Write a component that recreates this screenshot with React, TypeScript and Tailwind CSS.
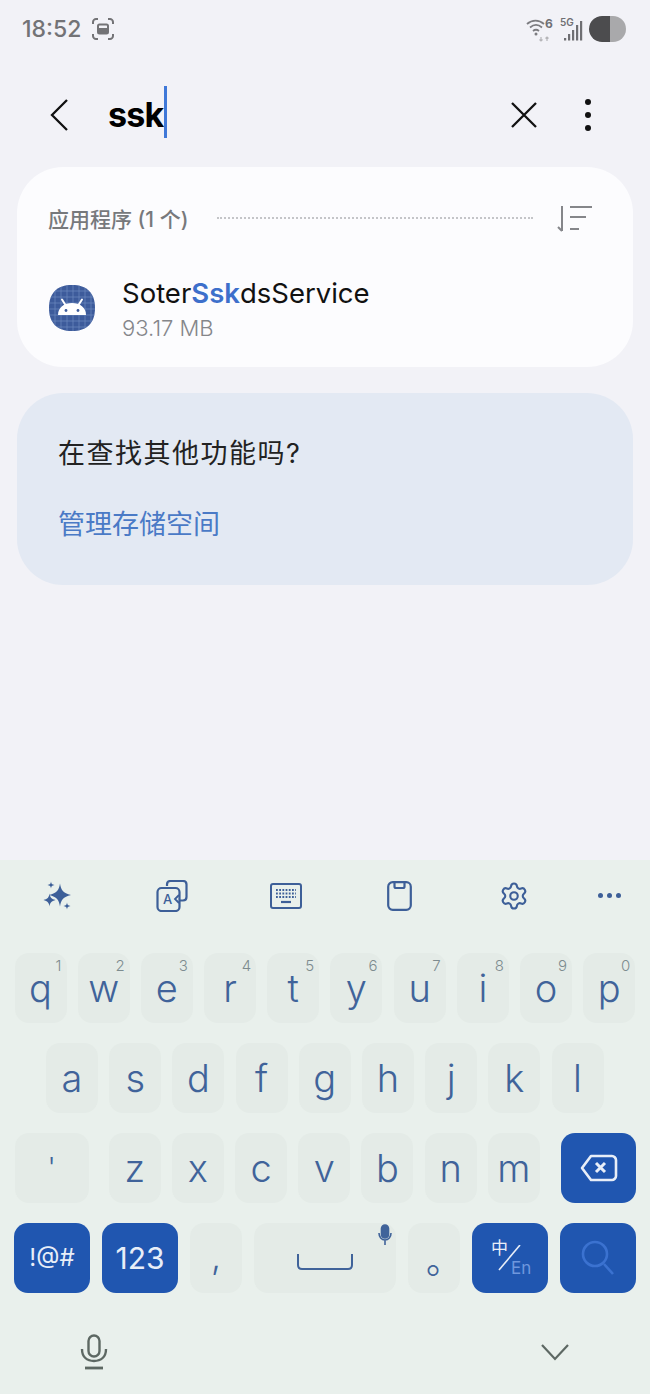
import React from 'react';
import { Settings } from 'lucide-react';

const sans = 'font-["Inter","Noto_Sans_CJK_SC",sans-serif]';

const Key: React.FC<{ label: string; digit?: string; w?: string; textClass?: string }> = ({ label, digit, w = 'w-[52px]', textClass = 'text-[38px]' }) => (
  <div className={`relative ${w} h-full shrink-0 rounded-[14px] bg-[#e4ebe7] flex items-center justify-center font-[350] text-[#40639a] ${textClass}`}>
    {digit && <span className="absolute top-[7px] right-[5px] text-[15px] leading-[12px] text-[#7d8b8f]">{digit}</span>}
    <span className="leading-[30px]">{label}</span>
  </div>
);

const ActionKey: React.FC<{ children: React.ReactNode; w?: string }> = ({ children, w = 'w-[76px]' }) => (
  <div className={`relative ${w} h-full shrink-0 rounded-[14px] bg-[#2056b0] text-[#e8eef8] flex items-center justify-center`}>
    {children}
  </div>
);

const AppIcon = () => (
  <svg width="46" height="46" viewBox="0 0 46 46" className="ml-px -mt-[3px]">
    <defs>
      <clipPath id="sq">
        <path d="M23 0C38 0 46 8 46 23C46 38 38 46 23 46C8 46 0 38 0 23C0 8 8 0 23 0Z" />
      </clipPath>
    </defs>
    <g clipPath="url(#sq)">
      <rect width="46" height="46" fill="#3d5b9b" />
      {[6, 12, 18, 24, 30, 36, 42].map((p) => (
        <g key={p} stroke="#6f8abf" strokeWidth="0.7">
          <line x1={p} y1="0" x2={p} y2="46" />
          <line x1="0" y1={p} x2="46" y2={p} />
        </g>
      ))}
    </g>
    <path d="M9 30C9 22.5 15 18 23 18C31 18 37 22.5 37 30Z" fill="#fff" />
    <path d="M13 14.5L16.5 20M33 14.5L29.5 20" stroke="#fff" strokeWidth="2" strokeLinecap="round" />
    <circle cx="17" cy="25.5" r="1.4" fill="#3d5b9b" />
    <circle cx="29" cy="25.5" r="1.4" fill="#3d5b9b" />
  </svg>
);

const StatusIcons = () => (
  <div className="flex items-center">
    <svg width="30" height="26" viewBox="0 0 30 26" fill="none" className="mr-[4px]">
      <path d="M1 8C6 3.5 13 3.5 18 8" stroke="#7c7c80" strokeWidth="1.8" />
      <path d="M4 11.5C8 8 12 8 16 11.5" stroke="#7c7c80" strokeWidth="1.8" />
      <path d="M7 15C9 13.4 11 13.4 13 15" stroke="#7c7c80" strokeWidth="1.8" />
      <circle cx="10" cy="18" r="1.5" fill="#7c7c80" />
      <path d="M15 21V25M13.5 23.5L15 25L16.5 23.5" stroke="#b5b5b8" strokeWidth="1.2" />
      <path d="M21 25V21M19.5 22.5L21 21L22.5 22.5" stroke="#b5b5b8" strokeWidth="1.2" />
      <text x="19" y="12" fontSize="12" fontWeight="700" fill="#6f6f73" fontFamily="Inter">6</text>
    </svg>
    <div className="relative w-[24px] h-[26px] mr-[5px]">
      <span className="absolute left-0 top-[1px] text-[10px] leading-[11px] font-semibold text-[#6f6f73]">5G</span>
      <svg width="24" height="26" viewBox="0 0 24 26" className="absolute left-0 top-0" fill="#6f6f73">
        <rect x="4" y="22" width="2.2" height="2.5" />
        <rect x="8" y="18" width="2.2" height="6.5" />
        <rect x="12" y="14" width="2.2" height="10.5" />
        <rect x="16" y="9" width="2.2" height="15.5" />
        <rect x="20" y="5" width="2.2" height="19.5" />
      </svg>
    </div>
    <div className="w-[37px] h-[26px] rounded-full bg-[#a9a9ab] overflow-hidden">
      <div className="w-[21px] h-full bg-[#4c4c4e] rounded-l-full" />
    </div>
  </div>
);

const Toolbar = () => (
  <div className="flex h-[93px] items-start pt-[20px] text-[#3d5f98]">
    <div className="w-[114px] flex justify-center">
      <svg width="30" height="32" viewBox="0 0 30 32" fill="currentColor">
        <path d="M18 3.5C19 10 21 13 29 15C21 17 19 20 18 26.5C17 20 15 17 7 15C15 13 17 10 18 3.5Z" />
        <path d="M7.5 13.5C8 17.5 9.5 19 13.5 20C9.5 21 8 22.5 7.5 26.5C7 22.5 5.5 21 1.5 20C5.5 19 7 17.5 7.5 13.5Z" />
        <path d="M9 1.5C9.3 3.8 10 4.5 12.5 5C10 5.5 9.3 6.2 9 8.5C8.7 6.2 8 5.5 5.5 5C8 4.5 8.7 3.8 9 1.5Z" />
        <path d="M25 22.5C25.3 24.8 26 25.5 28.5 26C26 26.5 25.3 27.2 25 29.5C24.7 27.2 24 26.5 21.5 26C24 25.5 24.7 24.8 25 22.5Z" />
      </svg>
    </div>
    <div className="w-[116px] flex justify-center">
      <svg width="32" height="32" viewBox="0 0 32 32" fill="none" stroke="currentColor" strokeWidth="2.2">
        <path d="M11 6V4.5C11 2.5 12.5 1 14.5 1H27C29 1 30.5 2.5 30.5 4.5V17C30.5 19 29 20.5 27 20.5H24" />
        <rect x="1.5" y="8" width="22" height="23" rx="4" />
        <text x="7" y="24" fontSize="13" fill="currentColor" stroke="none" fontFamily="Inter" fontWeight="500">A</text>
        <path d="M23 15L19 19L23 23" strokeWidth="1.8" />
      </svg>
    </div>
    <div className="w-[111px] flex justify-center">
      <svg width="32" height="26" viewBox="0 0 32 26" fill="none" className="mt-[3px]">
        <rect x="1" y="1" width="30" height="24" rx="2" stroke="currentColor" strokeWidth="2" />
        <path d="M6 7H26M6 10.5H26M6 14H26" stroke="currentColor" strokeWidth="1.8" strokeDasharray="1.8 1.4" />
        <path d="M11 19H21" stroke="currentColor" strokeWidth="2.2" />
      </svg>
    </div>
    <div className="w-[117px] flex justify-center">
      <svg width="25" height="30" viewBox="0 0 25 30" fill="none" stroke="currentColor" strokeWidth="2.2" className="mt-px">
        <rect x="1.2" y="1.2" width="22.6" height="27.6" rx="4.5" />
        <path d="M7.5 1.5V5.5C7.5 6.5 8 7 9 7H16C17 7 17.5 6.5 17.5 5.5V1.5" />
      </svg>
    </div>
    <div className="w-[111px] flex justify-center">
      <Settings size={30} strokeWidth={1.7} className="mt-px" />
    </div>
    <div className="w-[81px] flex justify-center pt-[13px] gap-[4px]">
      <span className="w-[5px] h-[5px] rounded-full bg-current" />
      <span className="w-[5px] h-[5px] rounded-full bg-current" />
      <span className="w-[5px] h-[5px] rounded-full bg-current" />
    </div>
  </div>
);

const Keyboard = () => (
  <div className="h-[534px] bg-[#e9f0ec] flex flex-col">
    <Toolbar />
    <div className="flex flex-col gap-[20px] pl-[14.5px]">
      <div className="flex h-[70px] gap-[11.2px]">
        {['q', 'w', 'e', 'r', 't', 'y', 'u', 'i', 'o', 'p'].map((k, i) => (
          <Key key={k} label={k} digit={String((i + 1) % 10)} />
        ))}
      </div>
      <div className="flex h-[70px] gap-[11.2px] pl-[31.5px]">
        {['a', 's', 'd', 'f', 'g', 'h', 'j', 'k', 'l'].map((k) => (
          <Key key={k} label={k} />
        ))}
      </div>
      <div className="flex h-[70px] gap-[11.2px]">
        <Key label="'" w="w-[74px] mr-[9px]" textClass="text-[28px]" />
        {['z', 'x', 'c', 'v', 'b', 'n', 'm'].map((k) => (
          <Key key={k} label={k} />
        ))}
        <ActionKey w="w-[75px] ml-[10px]">
          <svg width="38" height="28" viewBox="0 0 38 28" fill="none" stroke="currentColor" strokeWidth="2.6">
            <path d="M11 2H32C34 2 36 4 36 6V22C36 24 34 26 32 26H11L2 14Z" strokeLinejoin="round" />
            <path d="M16 9L25 18M25 9L16 18" strokeWidth="3" />
          </svg>
        </ActionKey>
      </div>
      <div className="flex h-[70px] gap-[12px] -ml-[0.5px]">
        <ActionKey><span className="text-[24px]">!@#</span></ActionKey>
        <ActionKey><span className="text-[30px]">123</span></ActionKey>
        <Key label="," textClass="text-[36px] pb-[4px]" />
        <div className="relative w-[142px] h-full shrink-0 rounded-[14px] bg-[#e4ebe7] flex items-center justify-center text-[#40639a]">
          <svg width="56" height="18" viewBox="0 0 56 18" fill="none" stroke="currentColor" strokeWidth="2" className="mt-[8px]">
            <path d="M1 1V12C1 15 3 16 5 16H51C53 16 55 15 55 12V1" />
          </svg>
          <svg width="14" height="22" viewBox="0 0 14 22" className="absolute top-[1px] right-[4px]" fill="none" stroke="currentColor" strokeWidth="1.6">
            <rect x="3.5" y="1" width="7" height="13" rx="3.5" fill="currentColor" />
            <path d="M1 9C1 13 3.5 16 7 16C10.5 16 13 13 13 9M7 16V21" />
          </svg>
        </div>
        <Key label="。" textClass="text-[36px] pt-[6px] pl-[20px]" />
        <ActionKey>
          <span className="absolute left-[19px] top-[17px] text-[17px] leading-none">中</span>
          <svg width="30" height="30" viewBox="0 0 30 30" className="absolute left-[26px] top-[22px]" stroke="currentColor" strokeWidth="1.6">
            <line x1="22" y1="0" x2="1" y2="25" />
          </svg>
          <span className="absolute left-[39px] top-[37px] text-[17px] leading-none text-[#6f97dd]">En</span>
        </ActionKey>
        <ActionKey>
          <svg width="34" height="38" viewBox="0 0 34 38" fill="none" stroke="#3b72d0" strokeWidth="2.6">
            <circle cx="14" cy="15" r="12" />
            <path d="M23 25L32 35" />
          </svg>
        </ActionKey>
      </div>
    </div>
    <div className="flex-1 flex items-start justify-between px-[80px] pt-[41px]">
      <svg width="28" height="36" viewBox="0 0 28 36" fill="none" stroke="#5d6863" strokeWidth="2.4">
        <rect x="8.5" y="1.5" width="11" height="21" rx="5.5" />
        <path d="M2 15C2 23 7 27 14 27C21 27 26 23 26 15" />
        <path d="M5 34H23" strokeWidth="2.8" />
      </svg>
      <svg width="30" height="18" viewBox="0 0 30 18" fill="none" stroke="#5d6863" strokeWidth="2.2" className="mt-[9px]">
        <path d="M2 2L15 16L28 2" />
      </svg>
    </div>
  </div>
);

export default function App() {
  return (
    <div className={`w-[650px] h-[1394px] bg-[#f2f2f7] flex flex-col overflow-hidden ${sans}`}>
      <div className="flex-1 flex flex-col">
        {/* status bar */}
        <div className="h-[58px] flex items-center justify-between pl-[22px] pr-[24px] text-[#737376]">
          <div className="flex items-center gap-[11px]">
            <span className="text-[23px] font-medium leading-none">18:52</span>
            <svg width="22" height="22" viewBox="0 0 22 22" fill="none" stroke="#737376" strokeWidth="2">
              <path d="M1 6V4C1 2.5 2.5 1 4 1H6M16 1H18C19.5 1 21 2.5 21 4V6M21 16V18C21 19.5 19.5 21 18 21H16M6 21H4C2.5 21 1 19.5 1 18V16" />
              <rect x="6" y="6.5" width="10" height="9" rx="1.5" />
              <rect x="6.5" y="10" width="9" height="5" fill="#737376" stroke="none" />
            </svg>
          </div>
          <StatusIcons />
        </div>

        {/* search bar */}
        <div className="h-[109px] flex items-center pt-[4px]">
          <svg width="20" height="34" viewBox="0 0 20 34" fill="none" stroke="#111" strokeWidth="2.3" className="ml-[50px]">
            <path d="M17 2L2 17L17 32" />
          </svg>
          <div className="ml-[38px] flex items-center">
            <span className="text-[34px] font-bold text-black tracking-[-0.8px] leading-none">ssk</span>
            <span className="w-[3px] h-[52px] bg-[#3f78d8] ml-px -mt-[6px]" />
          </div>
          <svg width="28" height="28" viewBox="0 0 28 28" fill="none" stroke="#111" strokeWidth="2.3" className="ml-auto mr-[47px]">
            <path d="M2 2L26 26M26 2L2 26" />
          </svg>
          <div className="flex flex-col gap-[7px] mr-[59px]">
            <span className="w-[6px] h-[6px] rounded-full bg-[#111]" />
            <span className="w-[6px] h-[6px] rounded-full bg-[#111]" />
            <span className="w-[6px] h-[6px] rounded-full bg-[#111]" />
          </div>
        </div>

        {/* results card */}
        <div className="mx-[17px] h-[200px] rounded-[46px] bg-[#fcfcfe] pl-[31px] pr-[40px] pt-[37px]">
          <div className="flex items-center h-[30px]">
            <span className="text-[21px] font-medium text-[#77797c] leading-none whitespace-nowrap">应用程序 (1 个)</span>
            <div className="ml-[29px] w-[316px] border-t-2 border-dotted border-[#c4c5c8] -mt-[3px]" />
            <svg width="36" height="30" viewBox="0 0 36 30" fill="none" stroke="#85868a" strokeWidth="2" className="ml-auto">
              <path d="M5 2V27M1 23L5 27" />
              <path d="M13 3H35M13 13H29M13 25H22" />
            </svg>
          </div>
          <div className="flex items-center mt-[42px]">
            <AppIcon />
            <div className="ml-[27px] flex flex-col">
              <span className="text-[27.5px] leading-[34px] text-[#111] whitespace-nowrap">
                Soter<span className="font-semibold text-[#3d6fcb]">Ssk</span>dsService
              </span>
              <span className="text-[22px] font-light leading-[28px] text-[#85868a] mt-[4px]">93.17 MB</span>
            </div>
          </div>
        </div>

        {/* suggestion card */}
        <div className="mx-[17px] mt-[26px] h-[192px] rounded-[46px] bg-[#e3e9f3] pl-[41px] pt-[42px]">
          <p className="text-[27px] leading-[38px] tracking-[1.5px] text-[#222]">在查找其他功能吗?</p>
          <p className="text-[27px] leading-[38px] text-[#4a7ac6] mt-[33px]">管理存储空间</p>
        </div>
      </div>

      <Keyboard />
    </div>
  );
}
